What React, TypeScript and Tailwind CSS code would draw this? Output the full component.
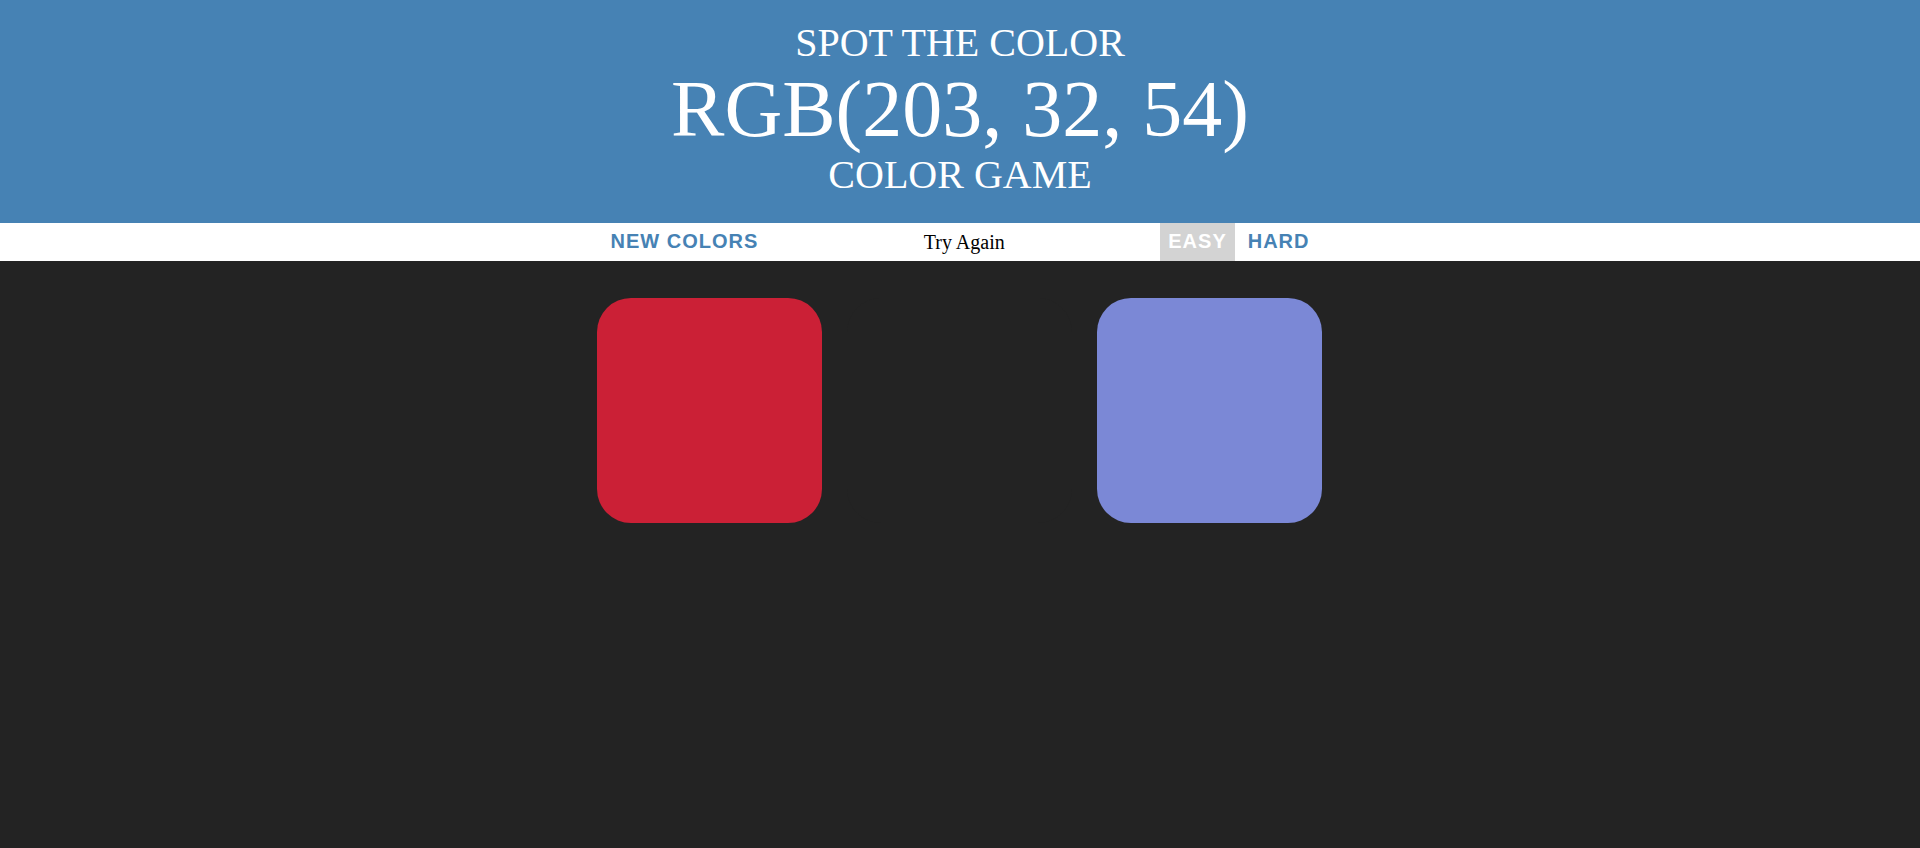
import React, { useState } from "react";

const squares = [
  { id: 1, color: "rgb(203, 32, 54)" },
  { id: 2, color: "#232323" },
  { id: 3, color: "rgb(123, 136, 214)" },
];

export default function App() {
  const [mode, setMode] = useState<"easy" | "hard">("easy");

  return (
    <div className="min-h-[848px] bg-[#232323] font-['Liberation_Serif',serif]">
      {/* header */}
      <h1 className="bg-[#4682b4] pt-[21px] pb-[26px] text-center font-normal uppercase text-white">
        <span className="block text-[40px] leading-[44px]">Spot the color</span>
        <span className="block text-[80px] leading-[88px]">RGB(203, 32, 54)</span>
        <span className="block text-[40px] leading-[44px]">Color Game</span>
      </h1>

      {/* stripe */}
      <div className="flex h-[38px] justify-center gap-[5px] bg-white">
        <button className="flex h-full items-center px-2 pb-[2px] font-['Liberation_Sans',sans-serif] text-[20px] font-bold uppercase tracking-[1px] text-[#4682b4]">
          New Colors
        </button>
        <span className="flex h-full w-[384px] items-center justify-center pb-[1px] pl-[2px] text-[20px] text-black">
          Try Again
        </span>
        {(["easy", "hard"] as const).map((m) => (
          <button
            key={m}
            onClick={() => setMode(m)}
            className={
              mode === m
                ? "flex h-full items-center bg-[#d3d3d3] px-2 pb-[2px] font-['Liberation_Sans',sans-serif] text-[20px] font-bold uppercase tracking-[1px] text-white"
                : "flex h-full items-center px-2 pb-[2px] font-['Liberation_Sans',sans-serif] text-[20px] font-bold uppercase tracking-[1px] text-[#4682b4]"
            }
          >
            {m}
          </button>
        ))}
      </div>

      {/* squares */}
      <div className="mx-auto flex w-[726px] gap-[25px] pt-[37px]">
        {squares.map((sq) => (
          <div
            key={sq.id}
            className="h-[225px] w-[225px] rounded-[34px]"
            style={{ backgroundColor: sq.color }}
          />
        ))}
      </div>
    </div>
  );
}
